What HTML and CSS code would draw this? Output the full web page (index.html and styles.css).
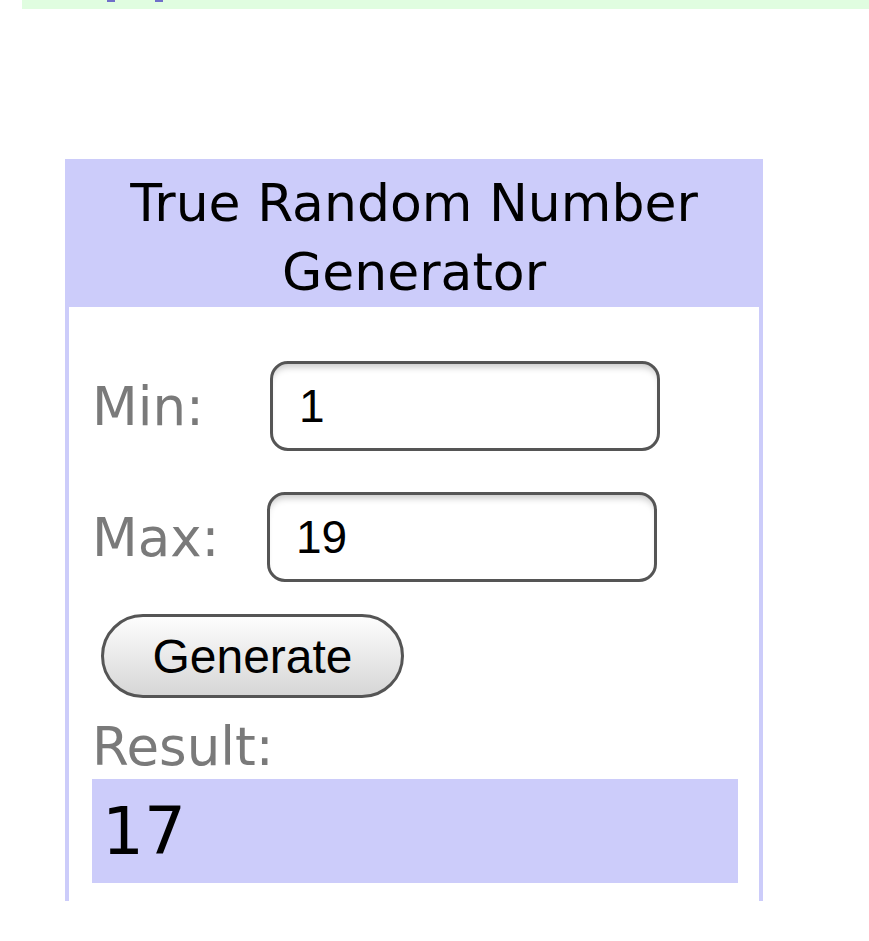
FILE: index.html
```html
<!DOCTYPE html>
<html>
<head>
    <title>True Random Number Generator</title>
    <link rel="stylesheet" href="styles.css">
</head>
<body>
    <div class="top-strip">
        <span class="mark mark-one"></span>
        <span class="mark mark-two"></span>
    </div>

    <div class="widget">
        <div class="widget-head">True Random Number Generator</div>
        <div class="widget-body">
            <div class="field">
                <label for="min">Min:</label>
                <input type="text" id="min" value="1">
            </div>
            <div class="field field-max">
                <label for="max">Max:</label>
                <input type="text" id="max" value="19">
            </div>
            <button type="button" id="generate">Generate</button>
            <div class="result-label">Result:</div>
            <div id="result">17</div>
        </div>
    </div>
</body>
</html>
```

FILE: styles.css
```css
body {
    margin: 0;
    font-family: "DejaVu Sans", Verdana, sans-serif;
    background: #fff;
}

.top-strip {
    position: relative;
    height: 9px;
    margin-left: 22px;
    background-color: #e0fde0;
}

.mark {
    position: absolute;
    top: 0;
    width: 8px;
    height: 2px;
    background-color: #6f6fc9;
}

.mark-one {
    left: 85px;
}

.mark-two {
    left: 133px;
}

.widget {
    width: 698px;
    margin: 150px 0 0 65px;
}

.widget-head {
    height: 148px;
    box-sizing: border-box;
    padding-top: 10px;
    background-color: #ccccfa;
    font-size: 52px;
    line-height: 69px;
    text-align: center;
    color: #000;
}

.widget-body {
    border-left: 4px solid #ccccfa;
    border-right: 4px solid #ccccfa;
    padding: 54px 21px 18px 23px;
}

.field {
    display: flex;
    align-items: center;
    margin-bottom: 41px;
}

.field label {
    width: 178px;
    font-size: 53px;
    color: #7a7a7a;
}

.field-max {
    margin-bottom: 32px;
}

.field-max label {
    width: 175px;
}

.field input {
    width: 390px;
    height: 90px;
    box-sizing: border-box;
    padding: 0 0 0 26px;
    border: 3px solid #555;
    border-radius: 18px;
    box-shadow: inset 0 7px 7px -4px rgba(0, 0, 0, 0.22);
    font-family: "Liberation Sans", Arial, sans-serif;
    font-size: 46px;
    color: #000;
    outline: none;
}

#generate {
    display: block;
    width: 303px;
    height: 84px;
    margin-left: 9px;
    border: 3px solid #555;
    border-radius: 42px;
    background: linear-gradient(#fdfdfd, #d6d6d6);
    font-family: "Liberation Sans", Arial, sans-serif;
    font-size: 48px;
    color: #000;
    cursor: pointer;
}

.result-label {
    margin-top: 19px;
    font-size: 53px;
    line-height: 60px;
    color: #7a7a7a;
}

#result {
    height: 104px;
    box-sizing: border-box;
    margin-top: 2px;
    padding: 14px 0 0 10px;
    background-color: #ccccfa;
    font-size: 66px;
    color: #000;
}
```
